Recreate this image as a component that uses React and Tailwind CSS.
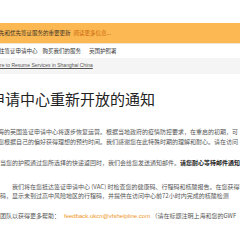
import React from 'react';

const cjk = { fontFamily: '"Noto Sans CJK SC", "Noto Sans", sans-serif' };
const latin = { fontFamily: '"Liberation Sans", sans-serif' };

const Line = ({ children, className = '' }) => (
  <div className={`whitespace-nowrap h-[9.5px] leading-[9.5px] ${className}`}>{children}</div>
);

const App = () => {
  return (
    <div className="w-[240px] h-[240px] overflow-hidden bg-white" style={cjk}>
      <div className="h-[23px]" />

      {/* notice banner */}
      <div className="h-[20px] bg-[#fcb852] flex items-center whitespace-nowrap text-[5.5px] text-[#3a3226]">
        <span className="-ml-[1px]">先和优先签证服务的重要更新</span>
        <span className="ml-[3px] text-[#c9650a]">阅读更多信息...</span>
      </div>
      <div className="h-[1px] bg-[#f3e6cc]" />

      {/* nav */}
      <div className="h-[14px] flex items-center whitespace-nowrap text-[5.5px] text-[#333]">
        <span className="-ml-[1px]">往签证申请中心</span>
        <span className="ml-[5px]">购买我们的服务</span>
        <span className="ml-[8px]">英国护照署</span>
      </div>

      {/* breadcrumb */}
      <div className="h-[16px] bg-[#f5f5f5] flex items-center whitespace-nowrap text-[5px] text-[#555]" style={latin}>
        <span className="underline">re to Resume Services in Shanghai China</span>
      </div>

      {/* heading */}
      <h1 className="mt-[16px] whitespace-nowrap text-[15px] leading-[18px] font-normal text-[#222] -ml-[10px]">
        申请中心重新开放的通知
      </h1>

      {/* body */}
      <div className="mt-[19px] text-[6px] text-[#555]">
        <Line className="-ml-[2px]">海的英国签证申请中心将逐步恢复运营。根据当地政府的疫情防控要求，在重启的初期，可</Line>
        <Line className="-ml-[2px]">您根据自己的偏好获得理想的预约时间。我们感谢您在此特殊时期的理解和耐心。请在访问</Line>

        <Line className="mt-[12px]">当您的护照通过您所选择的快递返回时，我们会给您发送通知邮件。<b className="text-[#222]">请您耐心等待邮件通知</b></Line>

        <Line className="mt-[14px] pl-[12px]">我们将在您抵达签证申请中心 (VAC) 时检查您的健康码、行程码和核酸报告。在您获得预</Line>
        <Line>码，显示未到过高中风险地区的行程码，并提供在访问中心前72小时内完成的核酸检测</Line>

        <Line className="mt-[10px]">
          团队以获得更多帮助：<span className="ml-[4px] text-[#ee951c]" style={latin}>feedback.ukcn@vfshelpline.com</span> （请在标题注明上海和您的GWF
        </Line>
      </div>
    </div>
  );
};

export default App;
